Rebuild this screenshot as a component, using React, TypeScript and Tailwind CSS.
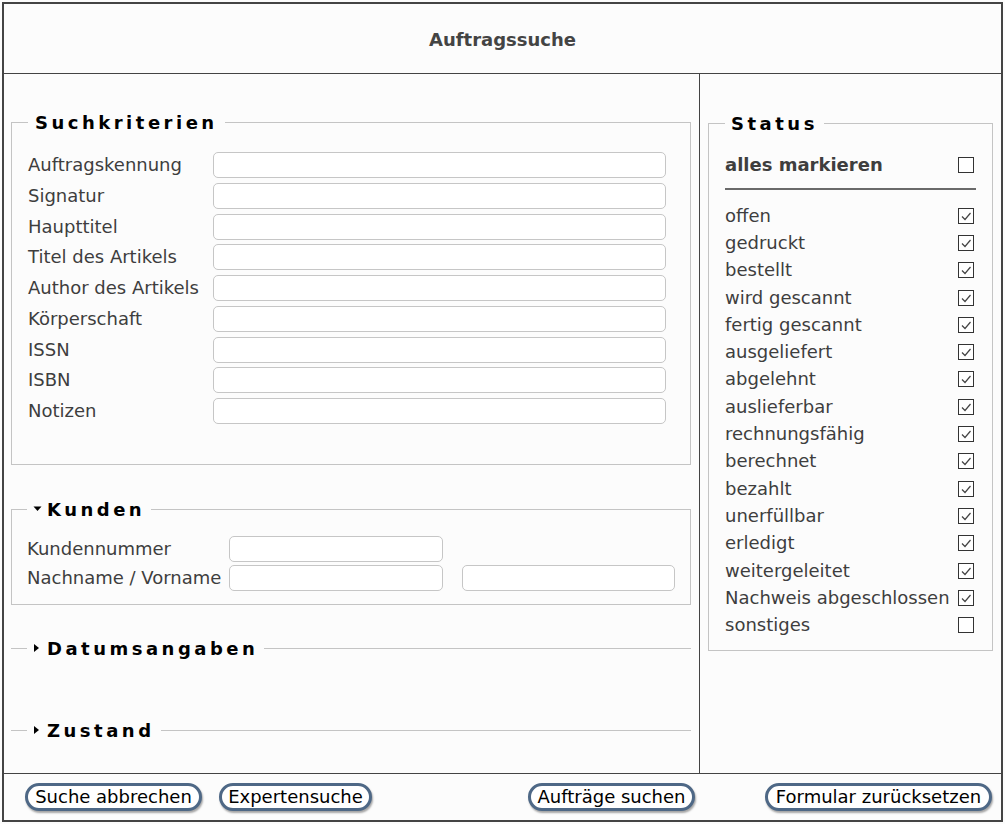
import React from "react";

const FONT = { fontFamily: '"DejaVu Sans", Verdana, sans-serif' };

function Check({ checked }: { checked: boolean }) {
  return (
    <span className="mr-[2px] flex h-[16px] w-[16px] items-center justify-center border border-[#333] bg-white">
      {checked && (
        <svg width="14" height="14" viewBox="0 0 14 14">
          <polyline points="3,7.5 6,10.5 11.5,4" fill="none" stroke="#444" strokeWidth="1.2" />
        </svg>
      )}
    </span>
  );
}

function Input({ className = "" }: { className?: string }) {
  return <div className={"h-[26px] rounded-[5px] border border-[#c6c6c6] bg-white " + className} />;
}

function TriDown() {
  return (
    <svg width="9" height="8" viewBox="0 0 9 8" className="mr-[5px] shrink-0">
      <polygon points="0.5,1.5 8.5,1.5 4.5,6" fill="#000" />
    </svg>
  );
}
function TriRight() {
  return (
    <svg width="7" height="10" viewBox="0 0 7 10" className="mr-[7px] shrink-0">
      <polygon points="1,1 6,5 1,9" fill="#000" />
    </svg>
  );
}

const legendCls =
  "flex items-center px-[7px] text-[18px] font-bold leading-[24px] tracking-[3.5px] text-black";

const fields = [
  "Auftragskennung",
  "Signatur",
  "Haupttitel",
  "Titel des Artikels",
  "Author des Artikels",
  "Körperschaft",
  "ISSN",
  "ISBN",
  "Notizen",
];

const statuses: [string, boolean][] = [
  ["offen", true],
  ["gedruckt", true],
  ["bestellt", true],
  ["wird gescannt", true],
  ["fertig gescannt", true],
  ["ausgeliefert", true],
  ["abgelehnt", true],
  ["auslieferbar", true],
  ["rechnungsfähig", true],
  ["berechnet", true],
  ["bezahlt", true],
  ["unerfüllbar", true],
  ["erledigt", true],
  ["weitergeleitet", true],
  ["Nachweis abgeschlossen", true],
  ["sonstiges", false],
];

function Btn({ label, w, className = "" }: { label: string; w: string; className?: string }) {
  return (
    <button
      className={
        "flex h-[28px] items-center justify-center rounded-full border-[3px] border-[#4e6886] bg-white text-[18px] leading-none text-black shadow-[1px_2px_2px_rgba(0,0,0,0.35)] " +
        w +
        " " +
        className
      }
    >
      {label}
    </button>
  );
}

export default function App() {
  return (
    <div className="h-[824px] w-[1005px] bg-[#fcfcfc] p-[2px]" style={FONT}>
      <div className="flex h-[820px] w-[1001px] flex-col border-2 border-[#444] bg-[#fcfcfc] text-[#3e3e3e]">
        <div className="flex h-[70px] items-center justify-center border-b border-[#444] pt-[2px] text-[18px] font-bold text-[#444]">
          Auftragssuche
        </div>
        <div className="flex h-[699px]">
          <div className="w-[696px] border-r border-[#444] pt-[36px]">
            <fieldset className="ml-[7px] mr-[8px] border border-[#c4c4c4] pb-[40px] pl-[16px] pr-[24px] pt-[18px]">
              <legend className={legendCls}>
                <span className="translate-y-[1px]">Suchkriterien</span>
              </legend>
              <div className="flex flex-col gap-[4.75px]">
                {fields.map((f) => (
                  <div key={f} className="flex items-center">
                    <span className="w-[185px] whitespace-nowrap text-[18px] leading-[20px]">{f}</span>
                    <Input className="flex-1" />
                  </div>
                ))}
              </div>
            </fieldset>

            <fieldset className="ml-[7px] mr-[8px] mt-[32px] border border-[#c4c4c4] pb-[13px] pl-[15px] pr-[15px] pt-[15px]">
              <legend className={legendCls + " !px-[6px]"}>
                <TriDown />
                <span className="translate-y-[1px]">Kunden</span>
              </legend>
              <div className="flex flex-col gap-[3px]">
                <div className="flex items-center">
                  <span className="w-[202px] text-[18px] leading-[20px]">Kundennummer</span>
                  <Input className="w-[214px]" />
                </div>
                <div className="flex items-center">
                  <span className="w-[202px] whitespace-nowrap text-[18px] leading-[20px]">Nachname / Vorname</span>
                  <Input className="w-[214px]" />
                  <Input className="ml-[19px] w-[213px]" />
                </div>
              </div>
            </fieldset>

            <fieldset className="ml-[7px] mr-[8px] mt-[31px] border-t border-[#c4c4c4] pl-[16px]">
              <legend className={legendCls + " !px-[6px]"}>
                <TriRight />
                <span className="translate-y-[1px]">Datumsangaben</span>
              </legend>
            </fieldset>

            <fieldset className="ml-[7px] mr-[8px] mt-[58px] border-t border-[#c4c4c4] pl-[16px]">
              <legend className={legendCls + " !px-[6px]"}>
                <TriRight />
                <span className="translate-y-[1px]">Zustand</span>
              </legend>
            </fieldset>
          </div>

          <div className="w-[301px] pt-[37px]">
            <fieldset className="ml-[8px] mr-[8px] border border-[#c4c4c4] pb-[11px] pl-[16px] pr-[16px] pt-[16px]">
              <legend className={legendCls + " !px-[6px]"}>
                <span className="translate-y-[1px]">Status</span>
              </legend>
              <div className="flex h-[27px] items-center justify-between">
                <span className="text-[18px] font-bold">alles markieren</span>
                <Check checked={false} />
              </div>
              <div className="mb-[12px] mt-[10px] h-[2px] bg-[#6a6a6a]" />
              {statuses.map(([s, c]) => (
                <div key={s} className="flex h-[27.3px] items-center justify-between">
                  <span className="whitespace-nowrap text-[18px] leading-[20px]">{s}</span>
                  <Check checked={c} />
                </div>
              ))}
            </fieldset>
          </div>
        </div>
        <div className="flex flex-1 items-center border-t border-[#444]">
          <Btn label="Suche abbrechen" w="w-[177px]" className="ml-[21px]" />
          <Btn label="Expertensuche" w="w-[153px]" className="ml-[17px]" />
          <Btn label="Aufträge suchen" w="w-[167px]" className="ml-[156px]" />
          <Btn label="Formular zurücksetzen" w="w-[227px]" className="ml-[70px]" />
        </div>
      </div>
    </div>
  );
}
